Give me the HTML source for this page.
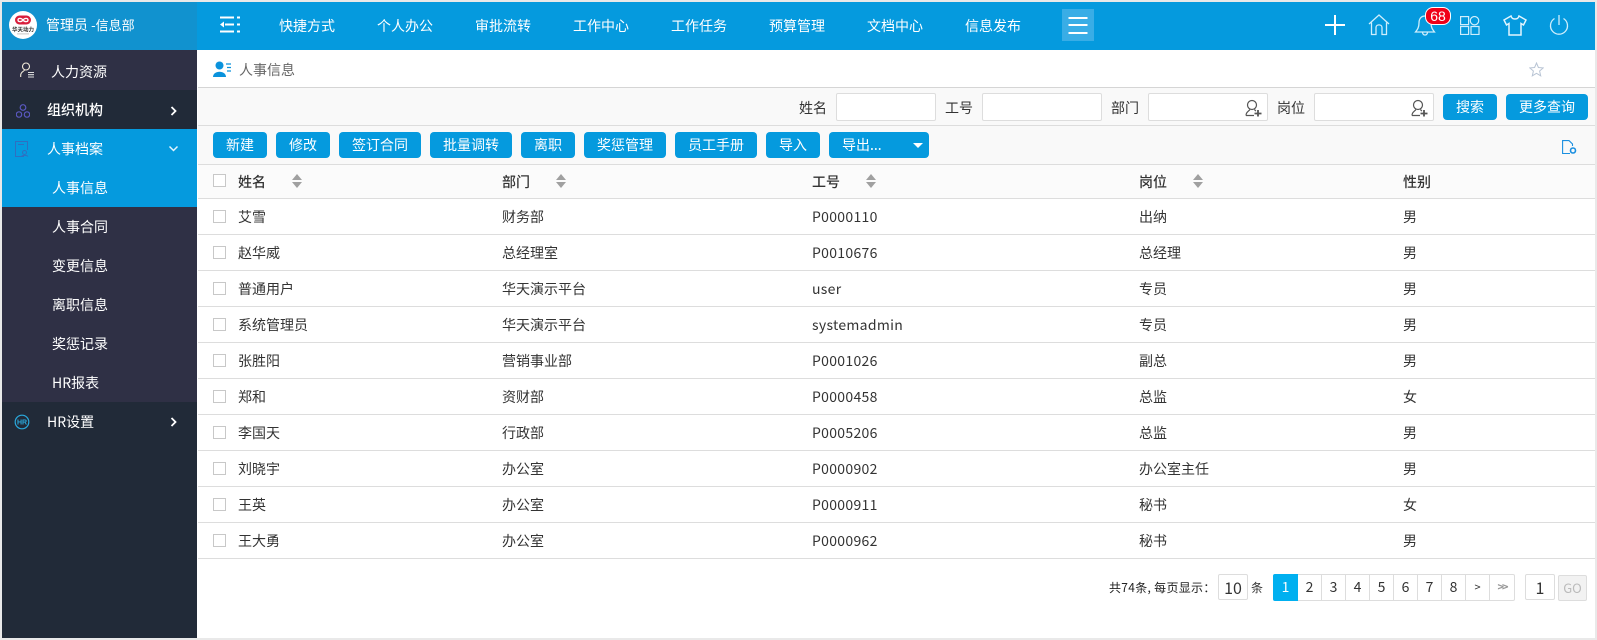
<!DOCTYPE html>
<html><head><meta charset="utf-8"><style>
html,body{margin:0;padding:0;width:1597px;height:640px;overflow:hidden;background:#e9e9e9;font-family:"Noto Sans CJK SC","Liberation Sans",sans-serif;font-size:14px;color:#333}
.a{position:absolute;white-space:nowrap}
.t{position:absolute;white-space:nowrap;line-height:20px}
.btn{position:absolute;background:#059ade;color:#fff;border-radius:4px;height:26px;line-height:26px;text-align:center;font-size:14px;top:132px}
.inp{position:absolute;background:#fff;border:1px solid #ddd;border-radius:2px;box-sizing:border-box;height:28px;top:93px}
.cb{position:absolute;left:213px;width:13px;height:13px;box-sizing:border-box;border:1px solid #c8c8c8;background:#fff}
.line{position:absolute;left:198px;width:1397px;height:1px;background:#ddd}
.pg{position:absolute;top:574px;height:27px;width:24px;box-sizing:border-box;border:1px solid #ddd;border-left:0;text-align:center;line-height:25px;font-size:14px;color:#333;background:#fff}
.sm{position:absolute;left:52px;color:#fff;line-height:20px;white-space:nowrap}
.nav{position:absolute;top:16px;color:#fff;line-height:20px;white-space:nowrap}
.m{letter-spacing:.3px}
</style></head><body>
<div class="a" style="left:2px;top:2px;width:1593px;height:636px;background:#fff"></div>

<!-- top bar -->
<div class="a" style="left:197px;top:2px;width:1398px;height:48px;background:#059ade"></div>
<div class="a" style="left:2px;top:2px;width:195px;height:48px;background:#1192cf"></div>
<svg class="a" style="left:9px;top:11px" width="28" height="28" viewBox="0 0 28 28"><circle cx="14" cy="14" r="14" fill="#fff"/><rect x="6" y="4.500" width="16" height="9" rx="4.500" fill="#d81e3c"/><path d="M14 9C12.500 6.800 9 6.800 9 9S12.500 11.200 14 9C15.500 6.800 19 6.800 19 9S15.500 11.200 14 9Z" fill="none" stroke="#fff" stroke-width="1.300"/><text x="14" y="20.500" text-anchor="middle" font-size="5.500" font-weight="700" fill="#333" font-family="Noto Sans CJK SC,sans-serif">华天动力</text><rect x="8" y="22.500" width="12" height=".8" fill="#bbb"/></svg>
<div class="t" style="left:46px;top:15px;color:#fff;font-size:14px">管理员 <span style="font-size:13px">-信息部</span></div>

<svg class="a" style="left:219px;top:15px" width="22" height="20" viewBox="0 0 22 20" fill="none" stroke="#fff" stroke-width="2"><path d="M1 2.500H15M18 2.500H21M6 9.500H15M18 9.500H21M1 16.500H15M18 16.500H21"/><path d="M5 6.500L1 9.500L5 12.500Z" fill="#fff" stroke="none"/></svg>
<div class="nav" style="left:279px">快捷方式</div><div class="nav" style="left:377px">个人办公</div><div class="nav" style="left:475px">审批流转</div><div class="nav" style="left:573px">工作中心</div><div class="nav" style="left:671px">工作任务</div><div class="nav" style="left:769px">预算管理</div><div class="nav" style="left:867px">文档中心</div><div class="nav" style="left:965px">信息发布</div>
<div class="a" style="left:1062px;top:9px;width:32px;height:32px;background:#39ade6"></div>
<svg class="a" style="left:1062px;top:9px" width="32" height="32" fill="none" stroke="#fff" stroke-width="2"><path d="M6.500 9H25.500M6.500 16H25.500M6.500 24H25.500"/></svg>

<svg class="a" style="left:1325px;top:15px" width="20" height="20" fill="none" stroke="#fff" stroke-width="2"><path d="M10 0V20M0 10H20"/></svg>
<svg class="a" style="left:1368px;top:14px" width="22" height="22" viewBox="0 0 22 22" fill="none" stroke="#cfeefc" stroke-width="1.300"><path d="M1 10L11 1L21 10M3.500 8.500V20.500H8V13.500C8 10 14 10 14 13.500V20.500H18.500V8.500"/></svg>
<svg class="a" style="left:1414px;top:14px" width="22" height="22" viewBox="0 0 22 22" fill="none" stroke="#cfeefc" stroke-width="1.300"><path d="M11 2C7 2 5 5 5 9C5 14 3 16 1.500 18H20.500C19 16 17 14 17 9C17 5 15 2 11 2ZM8.500 18C8.500 22 13.500 22 13.500 18"/></svg>
<div class="a" style="left:1425px;top:7px;width:24px;height:16px;background:#f00018;border:1px solid #fff;border-radius:8px;color:#fff;font-size:14px;line-height:16px;text-align:center;font-family:'Liberation Sans',sans-serif">68</div>
<svg class="a" style="left:1460px;top:16px" width="20" height="19" viewBox="0 0 20 19" fill="none" stroke="#cfeefc" stroke-width="1.200"><rect x=".6" y=".6" width="8" height="8"/><circle cx="14.500" cy="4.700" r="4.200"/><rect x=".6" y="10.500" width="8" height="8"/><rect x="11" y="10.500" width="8" height="8"/></svg>
<svg class="a" style="left:1503px;top:15px" width="24" height="21" viewBox="0 0 24 21" fill="none" stroke="#e3f5fe" stroke-width="1.500"><path d="M8 1L1 5L3.500 10L6 8.500V20H18V8.500L20.500 10L23 5L16 1C15 5 9 5 8 1Z"/></svg>
<svg class="a" style="left:1549px;top:14px" width="20" height="22" viewBox="0 0 20 22" fill="none" stroke="#cfeefc" stroke-width="1.300"><path d="M10 1V11M5.500 4.500A8.500 8.500 0 1 0 14.500 4.500"/></svg>

<!-- sidebar -->
<div class="a" style="left:2px;top:50px;width:195px;height:588px;background:#212a38"></div>
<div class="a" style="left:2px;top:50px;width:195px;height:40px;background:#2f3045"></div>
<div class="a" style="left:2px;top:129px;width:195px;height:78px;background:#059ade"></div>
<div class="a" style="left:2px;top:207px;width:195px;height:195px;background:#2f3045"></div>
<svg class="a" style="left:20px;top:62px" width="15" height="16" viewBox="0 0 15 16" fill="none" stroke="#f0e8d8" stroke-width="1.100"><circle cx="6" cy="4.500" r="3.500"/><path d="M.7 15V13C1 9.500 4 9.500 4.500 8"/><path d="M8 10.500H14M8 12.700H14M8 15H14" stroke="#ddd"/></svg>
<div class="sm" style="left:51px;top:62px">人力资源</div>
<svg class="a" style="left:16px;top:104px" width="14" height="14" viewBox="0 0 14 14" fill="none" stroke="#5a58c0" stroke-width="1.200"><circle cx="7" cy="3.500" r="2.800"/><circle cx="3" cy="10.500" r="2.700"/><circle cx="11" cy="10.500" r="2.700"/></svg>
<div class="sm" style="left:47px;top:100px;font-weight:500">组织机构</div>
<svg class="a" style="left:170px;top:106px" width="8" height="10" fill="none" stroke="#fff" stroke-width="1.800"><path d="M1.500 1L5.500 5L1.500 9"/></svg>
<svg class="a" style="left:15px;top:141px" width="14" height="16" viewBox="0 0 14 16" fill="none" stroke="#2f6fc0" stroke-width="1"><path d="M9 15.500H.5V.5H12.500V9M3 3.500H9"/><circle cx="9.500" cy="11.500" r="2"/><path d="M6.500 15.500C7 14 12 14 13 15.500"/></svg>
<div class="sm" style="left:47px;top:139px">人事档案</div>
<svg class="a" style="left:168px;top:145px" width="11" height="8" fill="none" stroke="#e3f5fe" stroke-width="1.500"><path d="M1.500 1.500L5.500 5.500L9.500 1.500"/></svg>
<div class="sm" style="top:178px">人事信息</div>
<div class="sm" style="top:217px">人事合同</div>
<div class="sm" style="top:256px">变更信息</div>
<div class="sm" style="top:295px">离职信息</div>
<div class="sm" style="top:334px">奖惩记录</div>
<div class="sm" style="top:373px">HR报表</div>
<svg class="a" style="left:14px;top:414px" width="16" height="16" viewBox="0 0 16 16"><circle cx="8" cy="8" r="6.800" fill="none" stroke="#2aa9dd" stroke-width="1.200"/><text x="8" y="10.500" text-anchor="middle" font-size="7" font-weight="700" fill="#2aa9dd" font-family="Liberation Sans">HR</text></svg>
<div class="sm" style="left:47px;top:412px">HR设置</div>
<svg class="a" style="left:170px;top:417px" width="8" height="10" fill="none" stroke="#fff" stroke-width="1.800"><path d="M1.500 1L5.500 5L1.500 9"/></svg>

<!-- breadcrumb -->
<svg class="a" style="left:213px;top:61px" width="18" height="16" viewBox="0 0 18 16"><circle cx="6.500" cy="4.500" r="4" fill="#0a92dc"/><path d="M0 16C0 9 13 9 13 16Z" fill="#0a92dc"/><path d="M13 3H18M14 6.500H18M14 10H18" stroke="#0a92dc" stroke-width="1.200"/></svg>
<div class="t" style="left:239px;top:60px;color:#666">人事信息</div>
<svg class="a" style="left:1529px;top:62px" width="15" height="15" viewBox="0 0 15 15" fill="none" stroke="#b8c4d4" stroke-width="1"><path d="M7.500 1L9.400 5.500L14.200 5.900L10.600 9L11.700 13.800L7.500 11.300L3.300 13.800L4.400 9L.8 5.900L5.600 5.500Z"/></svg>

<!-- search bar -->
<div class="a" style="left:198px;top:87px;width:1397px;height:77px;background:#f9f9f9"></div>
<div class="line" style="top:87px;background:#d5d5d5"></div>
<div class="line" style="top:125px"></div>
<div class="line" style="top:164px"></div>
<div class="t" style="left:799px;top:98px">姓名</div><div class="inp" style="left:836px;width:100px"></div>
<div class="t" style="left:945px;top:98px">工号</div><div class="inp" style="left:982px;width:120px"></div>
<div class="t" style="left:1111px;top:98px">部门</div><div class="inp" style="left:1148px;width:120px"></div>
<div class="t" style="left:1277px;top:98px">岗位</div><div class="inp" style="left:1314px;width:120px"></div>
<svg class="a" style="left:1245px;top:99px" width="17" height="18" viewBox="0 0 17 18" fill="none" stroke="#555" stroke-width="1.200"><circle cx="7" cy="6" r="4.500"/><path d="M1 16.500C1 13 3.500 12.500 5 10.500M9.500 10.500C10 11.300 10.500 11.800 11 12M1 16.500H9"/><path d="M13 11V17.500M9.500 14.500H16.500" stroke-width="1.800"/></svg>
<svg class="a" style="left:1411px;top:99px" width="17" height="18" viewBox="0 0 17 18" fill="none" stroke="#555" stroke-width="1.200"><circle cx="7" cy="6" r="4.500"/><path d="M1 16.500C1 13 3.500 12.500 5 10.500M9.500 10.500C10 11.300 10.500 11.800 11 12M1 16.500H9"/><path d="M13 11V17.500M9.500 14.500H16.500" stroke-width="1.800"/></svg>
<div class="btn" style="left:1443px;top:94px;width:54px">搜索</div>
<div class="btn" style="left:1506px;top:94px;width:82px">更多查询</div>

<!-- toolbar -->
<div class="btn" style="left:213px;width:54px">新建</div>
<div class="btn" style="left:276px;width:54px">修改</div>
<div class="btn" style="left:339px;width:82px">签订合同</div>
<div class="btn" style="left:430px;width:82px">批量调转</div>
<div class="btn" style="left:521px;width:54px">离职</div>
<div class="btn" style="left:584px;width:82px">奖惩管理</div>
<div class="btn" style="left:675px;width:82px">员工手册</div>
<div class="btn" style="left:766px;width:54px">导入</div>
<div class="btn" style="left:829px;width:100px;text-align:left;text-indent:13px">导出...</div>
<svg class="a" style="left:913px;top:143px" width="10" height="6"><path d="M0 0H10L5 5Z" fill="#fff"/></svg>
<svg class="a" style="left:1562px;top:140px" width="15" height="15" viewBox="0 0 15 15" fill="none" stroke="#1a8fe0" stroke-width="1.100"><path d="M8 13.500H.6V.6H7L10.500 4V6"/><circle cx="11" cy="10.500" r="2.500" stroke-width="1.600"/></svg>

<!-- table -->
<div class="a" style="left:198px;top:165px;width:1397px;height:33px;background:#fbfbfb"></div>
<div class="line" style="top:198px"></div><div class="line" style="top:234px"></div><div class="line" style="top:270px"></div><div class="line" style="top:306px"></div><div class="line" style="top:342px"></div><div class="line" style="top:378px"></div><div class="line" style="top:414px"></div><div class="line" style="top:450px"></div><div class="line" style="top:486px"></div><div class="line" style="top:522px"></div><div class="line" style="top:558px"></div>

<div class="cb" style="top:174px"></div>
<div class="t" style="left:238px;top:172px;font-weight:500">姓名</div>
<div class="t" style="left:502px;top:172px;font-weight:500">部门</div>
<div class="t" style="left:812px;top:172px;font-weight:500">工号</div>
<div class="t" style="left:1139px;top:172px;font-weight:500">岗位</div>
<div class="t" style="left:1403px;top:172px;font-weight:500">性别</div>
<svg class="a" style="left:292px;top:174px" width="10" height="14"><path d="M5 0L10 6H0ZM0 8H10L5 14Z" fill="#a0a0a0"/></svg>
<svg class="a" style="left:556px;top:174px" width="10" height="14"><path d="M5 0L10 6H0ZM0 8H10L5 14Z" fill="#a0a0a0"/></svg>
<svg class="a" style="left:866px;top:174px" width="10" height="14"><path d="M5 0L10 6H0ZM0 8H10L5 14Z" fill="#a0a0a0"/></svg>
<svg class="a" style="left:1193px;top:174px" width="10" height="14"><path d="M5 0L10 6H0ZM0 8H10L5 14Z" fill="#a0a0a0"/></svg>

<div class="cb" style="top:210px"></div><div class="t" style="left:238px;top:207px">艾雪</div><div class="t" style="left:502px;top:207px">财务部</div><div class="t m" style="left:812px;top:207px">P0000110</div><div class="t" style="left:1139px;top:207px">出纳</div><div class="t" style="left:1403px;top:207px">男</div>
<div class="cb" style="top:246px"></div><div class="t" style="left:238px;top:243px">赵华威</div><div class="t" style="left:502px;top:243px">总经理室</div><div class="t m" style="left:812px;top:243px">P0010676</div><div class="t" style="left:1139px;top:243px">总经理</div><div class="t" style="left:1403px;top:243px">男</div>
<div class="cb" style="top:282px"></div><div class="t" style="left:238px;top:279px">普通用户</div><div class="t" style="left:502px;top:279px">华天演示平台</div><div class="t m" style="left:812px;top:279px">user</div><div class="t" style="left:1139px;top:279px">专员</div><div class="t" style="left:1403px;top:279px">男</div>
<div class="cb" style="top:318px"></div><div class="t" style="left:238px;top:315px">系统管理员</div><div class="t" style="left:502px;top:315px">华天演示平台</div><div class="t m" style="left:812px;top:315px">systemadmin</div><div class="t" style="left:1139px;top:315px">专员</div><div class="t" style="left:1403px;top:315px">男</div>
<div class="cb" style="top:354px"></div><div class="t" style="left:238px;top:351px">张胜阳</div><div class="t" style="left:502px;top:351px">营销事业部</div><div class="t m" style="left:812px;top:351px">P0001026</div><div class="t" style="left:1139px;top:351px">副总</div><div class="t" style="left:1403px;top:351px">男</div>
<div class="cb" style="top:390px"></div><div class="t" style="left:238px;top:387px">郑和</div><div class="t" style="left:502px;top:387px">资财部</div><div class="t m" style="left:812px;top:387px">P0000458</div><div class="t" style="left:1139px;top:387px">总监</div><div class="t" style="left:1403px;top:387px">女</div>
<div class="cb" style="top:426px"></div><div class="t" style="left:238px;top:423px">李国天</div><div class="t" style="left:502px;top:423px">行政部</div><div class="t m" style="left:812px;top:423px">P0005206</div><div class="t" style="left:1139px;top:423px">总监</div><div class="t" style="left:1403px;top:423px">男</div>
<div class="cb" style="top:462px"></div><div class="t" style="left:238px;top:459px">刘晓宇</div><div class="t" style="left:502px;top:459px">办公室</div><div class="t m" style="left:812px;top:459px">P0000902</div><div class="t" style="left:1139px;top:459px">办公室主任</div><div class="t" style="left:1403px;top:459px">男</div>
<div class="cb" style="top:498px"></div><div class="t" style="left:238px;top:495px">王英</div><div class="t" style="left:502px;top:495px">办公室</div><div class="t m" style="left:812px;top:495px">P0000911</div><div class="t" style="left:1139px;top:495px">秘书</div><div class="t" style="left:1403px;top:495px">女</div>
<div class="cb" style="top:534px"></div><div class="t" style="left:238px;top:531px">王大勇</div><div class="t" style="left:502px;top:531px">办公室</div><div class="t m" style="left:812px;top:531px">P0000962</div><div class="t" style="left:1139px;top:531px">秘书</div><div class="t" style="left:1403px;top:531px">男</div>

<!-- pagination -->
<div class="t" style="left:1109px;top:578px;font-size:12px;letter-spacing:.3px;color:#222">共74条, 每页显示：</div>
<div class="a" style="left:1218px;top:574px;width:30px;height:26px;box-sizing:border-box;border:1px solid #ddd;border-radius:2px;text-align:center;line-height:24px;font-size:16px">10</div>
<div class="t" style="left:1251px;top:578px;font-size:12px">条</div>
<div class="pg" style="left:1273px;width:25px;background:#00b0f0;color:#fff;border:0;border-radius:2px 0 0 2px;line-height:27px">1</div>
<div class="pg" style="left:1298px">2</div><div class="pg" style="left:1322px">3</div><div class="pg" style="left:1346px">4</div><div class="pg" style="left:1370px">5</div><div class="pg" style="left:1394px">6</div><div class="pg" style="left:1418px">7</div><div class="pg" style="left:1442px">8</div><div class="pg" style="left:1466px;font-size:11px">&gt;</div><div class="pg" style="left:1490px;width:25px;font-size:11px;font-weight:700;letter-spacing:-2px;color:#999;border-radius:0 2px 2px 0">&gt;&gt;</div>
<div class="a" style="left:1525px;top:574px;width:30px;height:26px;box-sizing:border-box;border:1px solid #ddd;border-radius:2px;text-align:center;line-height:24px;font-size:16px">1</div>
<div class="a" style="left:1558px;top:575px;width:29px;height:26px;box-sizing:border-box;border:1px solid #ddd;border-radius:2px;background:#f2f2f2;color:#bbb;text-align:center;line-height:24px;font-size:13px">GO</div>
</body></html>
